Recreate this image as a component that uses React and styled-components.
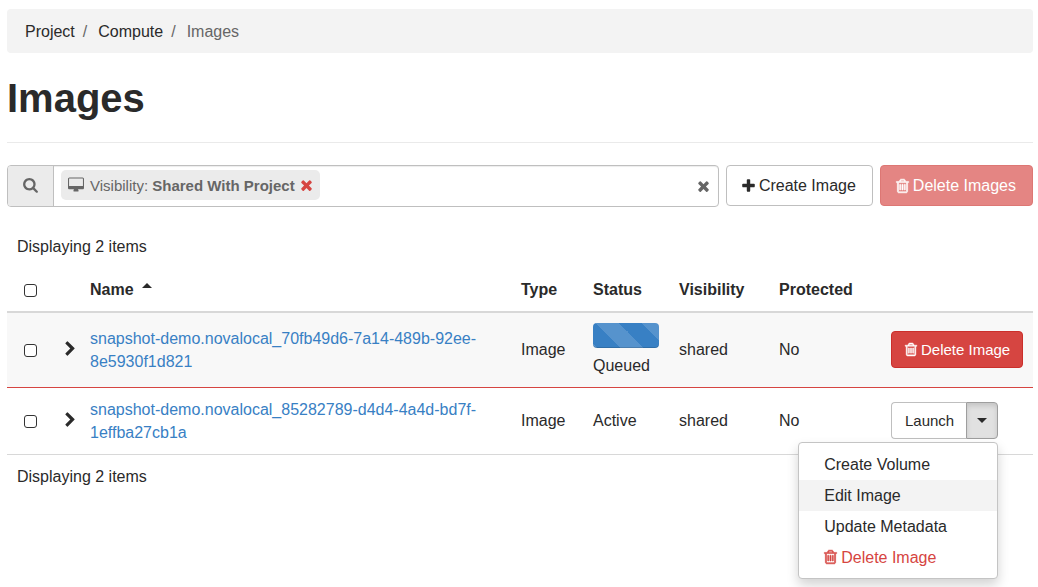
import React from "react";
import styled, { createGlobalStyle, css } from "styled-components";

const textColor = "#2a2a2a";
const mutedColor = "#666";
const linkColor = "#3880c4";
const dangerColor = "#d64541";
const borderColor = "#bfbfbf";
const lineColor = "#d8d8d8";
const fontStack = `"Liberation Sans", Arial, Helvetica, sans-serif`;

const GlobalStyle = createGlobalStyle`
  *, *::before, *::after {
    box-sizing: border-box;
  }
  body {
    margin: 0;
    background: #fff;
    color: ${textColor};
    font-family: ${fontStack};
    font-size: 16px;
    line-height: 23px;
  }
  button, input {
    font-family: inherit;
  }
`;

const icons = {
  trash: {
    box: "192 0 1408 1792",
    width: 13,
    path:
      "M704 736v576q0 14-9 23t-23 9h-64q-14 0-23-9t-9-23v-576q0-14 9-23t23-9h64q14 0 23 9t9 23zm256 0v576q0 14-9 23t-23 9h-64q-14 0-23-9t-9-23v-576q0-14 9-23t23-9h64q14 0 23 9t9 23zm256 0v576q0 14-9 23t-23 9h-64q-14 0-23-9t-9-23v-576q0-14 9-23t23-9h64q14 0 23 9t9 23zm128 724v-948h-896v948q0 22 7 40.5t14.5 27 10.5 8.5h832q3 0 10.5-8.5t14.5-27 7-40.5zm-672-1076h448l-48-117q-7-9-17-11h-317q-10 2-17 11zm928 32v64q0 14-9 23t-23 9h-96v948q0 83-47 143.5t-113 60.5h-832q-66 0-113-58.5t-47-141.5v-952h-96q-14 0-23-9t-9-23v-64q0-14 9-23t23-9h309l70-167q15-37 54-63t79-26h320q40 0 79 26t54 63l70 167h309q14 0 23 9t9 23z",
    stroke: 60
  },
  search: {
    box: "64 128 1664 1792",
    width: 15,
    path:
      "M1216 832q0-185-131.5-316.5t-316.5-131.5-316.5 131.5-131.5 316.5 131.5 316.5 316.5 131.5 316.5-131.5 131.5-316.5zm512 832q0 52-38 90t-90 38q-54 0-90-38l-343-342q-179 124-399 124-143 0-273.5-55.5t-225-150-150-225-55.5-273.5 55.5-273.5 150-225 225-150 273.5-55.5 273.5 55.5 225 150 150 225 55.5 273.5q0 220-124 399l343 343q37 37 37 90z"
  },
  times: {
    box: "280 0 1232 1792",
    width: 11,
    path:
      "M1490 1322q0 40-28 68l-136 136q-28 28-68 28t-68-28l-294-294-294 294q-28 28-68 28t-68-28l-136-136q-28-28-28-68t28-68l294-294-294-294q-28-28-28-68t28-68l136-136q28-28 68-28t68 28l294 294 294-294q28-28 68-28t68 28l136 136q28 28 28 68t-28 68l-294 294 294 294q28 28 28 68z"
  },
  plus: {
    box: "192 0 1408 1792",
    width: 13,
    path:
      "M1600 736v192q0 40-28 68t-68 28h-416v416q0 40-28 68t-68 28h-192q-40 0-68-28t-28-68v-416h-416q-40 0-68-28t-28-68v-192q0-40 28-68t68-28h416v-416q0-40 28-68t68-28h192q40 0 68 28t28 68v416h416q40 0 68 28t28 68z"
  },
  chevron: {
    box: "346 0 1036 1792",
    width: 10,
    path:
      "M1363 877l-742 742q-19 19-45 19t-45-19l-166-166q-19-19-19-45t19-45l531-531-531-531q-19-19-19-45t19-45l166-166q19-19 45-19t45 19l742 742q19 19 19 45t-19 45z"
  },
  desktop: {
    box: "-64 0 1920 1792",
    width: 16,
    path:
      "M1728 992v-832q0-13-9.5-22.5t-22.5-9.5h-1600q-13 0-22.5 9.5t-9.5 22.5v832q0 13 9.5 22.5t22.5 9.5h1600q13 0 22.5-9.5t9.5-22.5zm128-832v1088q0 66-47 113t-113 47h-544q0 37 16 77.5t32 71 16 43.5q0 26-19 45t-45 19h-512q-26 0-45-19t-19-45q0-14 16-44t32-70 16-78h-544q-66 0-113-47t-47-113v-1088q0-66 47-113t113-47h1600q66 0 113 47t47 113z"
  }
};

const Svg = styled.svg`
  display: block;
  flex: none;
  overflow: visible;
  fill: currentColor;
  stroke: currentColor;
`;

const Icon = ({ name, height = 16 }) => (
  <Svg
    viewBox={icons[name].box}
    width={Math.round((icons[name].width * height) / 16)}
    height={height}
    strokeWidth={icons[name].stroke || 0}
    aria-hidden="true"
  >
    <path d={icons[name].path} />
  </Svg>
);

const Page = styled.main`
  min-height: 100vh;
  padding: 9px 5px 0 7px;
`;

const Breadcrumb = styled.ol`
  display: flex;
  list-style: none;
  margin: 0;
  padding: 11px 18px 10px;
  border-radius: 4px;
  background: #f3f3f3;
  color: ${mutedColor};
`;

const Crumb = styled.li`
  & + &::before {
    content: "/";
    padding: 0 11px 0 8px;
    color: ${mutedColor};
  }
`;

const CrumbLink = styled.a`
  color: ${textColor};
  text-decoration: none;
`;

const PageHeader = styled.header`
  padding: 22px 0 20px;
  margin-bottom: 22px;
  border-bottom: 1px solid #eaeaea;
`;

const Title = styled.h1`
  margin: 0;
  font-size: 40px;
  font-weight: bold;
  line-height: 47px;
`;

const Toolbar = styled.div`
  display: flex;
  align-items: flex-start;
  gap: 7px;
  margin-bottom: 18px;
`;

const SearchBar = styled.div`
  display: flex;
  flex: 1;
  height: 42px;
  border: 1px solid ${borderColor};
  border-radius: 4px;
  overflow: hidden;
  box-shadow: inset 0 1px 1px rgba(0, 0, 0, 0.075);
`;

const SearchAddon = styled.label`
  display: flex;
  align-items: center;
  justify-content: center;
  width: 46px;
  border-right: 1px solid ${borderColor};
  background: #ebebeb;
  color: ${mutedColor};
`;

const SearchTag = styled.span`
  display: flex;
  align-items: center;
  gap: 6px;
  height: 30px;
  margin: 4px 0 0 7px;
  padding: 0 8px 0 7px;
  border-radius: 5px;
  background: #ebebeb;
  color: ${mutedColor};
  font-size: 15px;
  white-space: nowrap;
`;

const SearchInput = styled.input`
  flex: 1;
  min-width: 0;
  padding: 0 8px;
  border: none;
  outline: none;
  background: transparent;
  font-size: 16px;
`;

const IconButton = styled.button`
  display: flex;
  align-items: center;
  padding: 0;
  border: none;
  background: transparent;
  color: ${props => props.$color || textColor};
  cursor: pointer;
`;

const ClearButton = styled(IconButton)`
  padding: 0 9px;
`;

const danger = css`
  border-color: #cb2f2b;
  background: ${dangerColor};
  color: #fff;
`;

const Button = styled.button`
  display: inline-flex;
  align-items: center;
  gap: 4px;
  height: ${props => (props.$small ? 37 : 41)}px;
  padding: ${props => (props.$small ? "0 12px 0 13px" : "0 16px 0 15px")};
  border: 1px solid ${borderColor};
  border-radius: 4px;
  background: #fff;
  color: ${textColor};
  font-size: ${props => (props.$small ? 15 : 16)}px;
  line-height: 23px;
  white-space: nowrap;
  cursor: pointer;
  ${props => props.$danger && danger};
  &:disabled {
    opacity: 0.65;
    cursor: not-allowed;
  }
`;

const Table = styled.table`
  width: 100%;
  table-layout: fixed;
  border-collapse: separate;
  border-spacing: 0;
`;

const Col = styled.col`
  width: ${props => (props.$width ? `${props.$width}px` : "auto")};
`;

const Count = styled.p`
  margin: 0;
  padding: 10px;
`;

const HeadCell = styled.th`
  padding: 10px;
  border-bottom: 2px solid ${lineColor};
  text-align: left;
  font-weight: bold;
`;

const Row = styled.tr`
  background: ${props => (props.$warning ? "#f8f8f8" : "#fff")};
  & > td {
    border-bottom: 1px solid
      ${props => (props.$warning ? dangerColor : lineColor)};
  }
`;

const Cell = styled.td`
  padding: 9px 10px 11px;
  vertical-align: middle;
`;

const NameCell = styled(Cell)`
  padding: 10px;
`;

const StatusCell = styled(Cell)`
  padding: ${props => (props.$queued ? "10px" : "9px 10px 11px")};
`;

const ExpandCell = styled(Cell)`
  padding-right: 0;
`;

const ActionCell = styled(Cell)`
  padding-top: 0;
  padding-bottom: 2px;
`;

const SortLabel = styled.button`
  display: flex;
  align-items: center;
  gap: 8px;
  padding: 0;
  border: none;
  background: none;
  color: inherit;
  font-size: 16px;
  font-weight: bold;
  line-height: 23px;
  cursor: pointer;
`;

const Caret = styled.svg`
  display: block;
  width: 10px;
  height: 5px;
  fill: currentColor;
`;

const SortCaret = styled(Caret)`
  margin-bottom: 8px;
`;

const Checkbox = styled.input`
  appearance: none;
  display: block;
  width: 13px;
  height: 13px;
  margin: 2px 0 0 7px;
  border: 1px solid #333;
  border-radius: 3px;
  background: #fff;
`;

const NameLink = styled.a`
  color: ${linkColor};
  text-decoration: none;
`;

const Progress = styled.div`
  height: 25px;
  margin-bottom: 6px;
  border-radius: 4px;
  background-color: #3880c4;
  background-image: linear-gradient(
    45deg,
    rgba(255, 255, 255, 0.15) 25%,
    transparent 25%,
    transparent 50%,
    rgba(255, 255, 255, 0.15) 50%,
    rgba(255, 255, 255, 0.15) 75%,
    transparent 75%,
    transparent
  );
  background-position: 3px 0;
  background-size: 46px 46px;
  box-shadow: inset 0 -1px 0 rgba(0, 0, 0, 0.15);
`;

const ButtonGroup = styled.div`
  position: relative;
  display: inline-flex;
  vertical-align: middle;
`;

const GroupMain = styled(Button)`
  border-radius: 4px 0 0 4px;
  border-right: none;
`;

const GroupToggle = styled(Button)`
  padding: 0 10px;
  border-color: #9e9e9e;
  border-radius: 0 4px 4px 0;
  background: #e1e1e1;
  box-shadow: inset 0 3px 5px rgba(0, 0, 0, 0.125);
`;

const Menu = styled.ul`
  position: absolute;
  top: 100%;
  right: 0;
  z-index: 10;
  width: 200px;
  margin: 3px 0 0;
  padding: 6px 0 5px;
  border: 1px solid #c4c4c4;
  border-radius: 4px;
  background: #fff;
  box-shadow: 0 6px 12px rgba(0, 0, 0, 0.175);
  list-style: none;
`;

const MenuItem = styled.button`
  display: flex;
  align-items: center;
  gap: 4px;
  width: 100%;
  padding: 4px 25px;
  border: none;
  background: ${props => (props.$active ? "#f3f3f3" : "transparent")};
  color: ${props => (props.$danger ? dangerColor : textColor)};
  font-size: 16px;
  line-height: 23px;
  text-align: left;
  cursor: pointer;
`;

const columns = [48, 25, null, 72, 86, 100, 112, 152];

const images = [
  {
    name: "snapshot-demo.novalocal_70fb49d6-7a14-489b-92ee-8e5930f1d821",
    type: "Image",
    status: "Queued",
    visibility: "shared",
    isProtected: "No"
  },
  {
    name: "snapshot-demo.novalocal_85282789-d4d4-4a4d-bd7f-1effba27cb1a",
    type: "Image",
    status: "Active",
    visibility: "shared",
    isProtected: "No"
  }
];

const LaunchActions = () => (
  <ButtonGroup>
    <GroupMain $small type="button">
      Launch
    </GroupMain>
    <GroupToggle $small type="button" aria-label="More actions" aria-expanded>
      <Caret viewBox="0 0 10 5">
        <path d="M0 0h10L5 5z" />
      </Caret>
    </GroupToggle>
    <Menu>
      <li>
        <MenuItem type="button">Create Volume</MenuItem>
      </li>
      <li>
        <MenuItem type="button" $active>
          Edit Image
        </MenuItem>
      </li>
      <li>
        <MenuItem type="button">Update Metadata</MenuItem>
      </li>
      <li>
        <MenuItem type="button" $danger>
          <Icon name="trash" />
          Delete Image
        </MenuItem>
      </li>
    </Menu>
  </ButtonGroup>
);

const ImageRow = ({ image }) => {
  const queued = image.status === "Queued";
  return (
    <Row $warning={queued}>
      <Cell>
        <Checkbox type="checkbox" aria-label={`Select ${image.name}`} />
      </Cell>
      <ExpandCell>
        <IconButton type="button" aria-label="Show details">
          <Icon name="chevron" />
        </IconButton>
      </ExpandCell>
      <NameCell>
        <NameLink href="#details">{image.name}</NameLink>
      </NameCell>
      <Cell>{image.type}</Cell>
      <StatusCell $queued={queued}>
        {queued && <Progress />}
        {image.status}
      </StatusCell>
      <Cell>{image.visibility}</Cell>
      <Cell>{image.isProtected}</Cell>
      <ActionCell>
        {queued ? (
          <Button $small $danger type="button">
            <Icon name="trash" height={15} />
            Delete Image
          </Button>
        ) : (
          <LaunchActions />
        )}
      </ActionCell>
    </Row>
  );
};

const App = () => (
  <>
    <GlobalStyle />
    <Page>
      <nav>
        <Breadcrumb>
          <Crumb>
            <CrumbLink href="#project">Project</CrumbLink>
          </Crumb>
          <Crumb>
            <CrumbLink href="#compute">Compute</CrumbLink>
          </Crumb>
          <Crumb>Images</Crumb>
        </Breadcrumb>
      </nav>
      <PageHeader>
        <Title>Images</Title>
      </PageHeader>
      <Toolbar>
        <SearchBar>
          <SearchAddon htmlFor="image-search" aria-label="Search">
            <Icon name="search" />
          </SearchAddon>
          <SearchTag>
            <Icon name="desktop" />
            <span>
              Visibility: <b>Shared With Project</b>
            </span>
            <IconButton
              type="button"
              aria-label="Remove filter"
              $color={dangerColor}
            >
              <Icon name="times" />
            </IconButton>
          </SearchTag>
          <SearchInput id="image-search" type="text" />
          <ClearButton
            type="button"
            aria-label="Clear search"
            $color={mutedColor}
          >
            <Icon name="times" />
          </ClearButton>
        </SearchBar>
        <Button type="button">
          <Icon name="plus" />
          Create Image
        </Button>
        <Button $danger type="button" disabled>
          <Icon name="trash" />
          Delete Images
        </Button>
      </Toolbar>
      <Count>Displaying {images.length} items</Count>
      <Table>
        <colgroup>
          {columns.map((width, i) => (
            <Col key={i} $width={width} />
          ))}
        </colgroup>
        <thead>
          <tr>
            <HeadCell>
              <Checkbox type="checkbox" aria-label="Select all" />
            </HeadCell>
            <HeadCell />
            <HeadCell>
              <SortLabel type="button">
                Name
                <SortCaret viewBox="0 0 10 5">
                  <path d="M0 5h10L5 0z" />
                </SortCaret>
              </SortLabel>
            </HeadCell>
            <HeadCell>Type</HeadCell>
            <HeadCell>Status</HeadCell>
            <HeadCell>Visibility</HeadCell>
            <HeadCell>Protected</HeadCell>
            <HeadCell />
          </tr>
        </thead>
        <tbody>
          {images.map(image => (
            <ImageRow key={image.name} image={image} />
          ))}
        </tbody>
      </Table>
      <Count>Displaying {images.length} items</Count>
    </Page>
  </>
);

export default App;
